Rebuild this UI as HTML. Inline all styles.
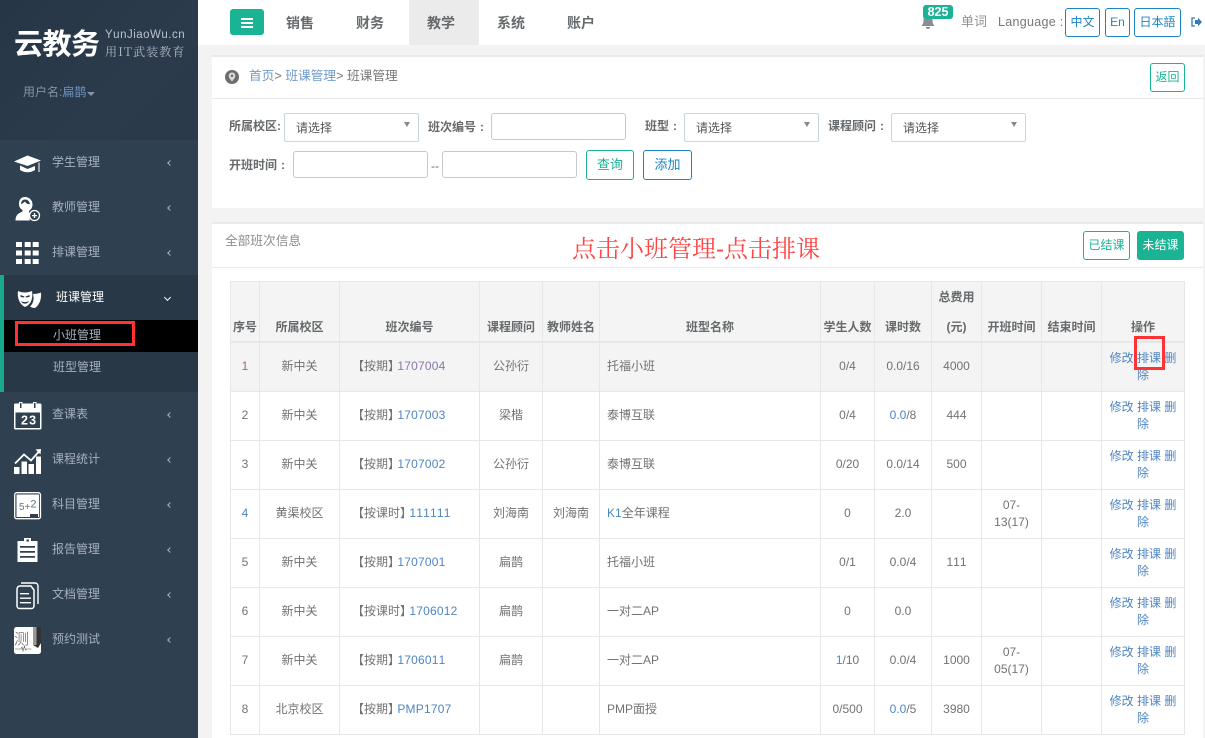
<!DOCTYPE html>
<html lang="zh"><head><meta charset="utf-8"><title>云教务</title>
<style>
*{box-sizing:border-box}
html,body{margin:0;padding:0;width:1205px;height:738px;overflow:hidden;background:#f3f3f4}
body{font:12px/1.4 "Liberation Sans","Noto Sans CJK SC",sans-serif;color:#676a6c;font-kerning:none}
#root{position:absolute;left:0;top:0;width:1205px;height:738px;overflow:hidden;background:#f3f3f4}
.a{position:absolute;white-space:nowrap}
#side{position:absolute;left:0;top:0;width:198px;height:738px;background:#2f4050;overflow:hidden}
#side .hd{position:absolute;left:0;top:0;width:198px;height:140px;background:linear-gradient(135deg,#263646,#2b3b4c 60%,#2a3a4a)}
.mi{position:absolute;left:52px;color:#a7b1c2;font-size:12px;line-height:17px;white-space:nowrap}
.ch{position:absolute;left:168px;width:4px;height:4px;border-left:1px solid #a7b1c2;border-bottom:1px solid #a7b1c2;transform:rotate(45deg)}
.ic{position:absolute;left:0;top:0}
#top{position:absolute;left:198px;top:0;width:1007px;height:45px;background:#fff}
.nav{position:absolute;top:14px;font-size:14px;line-height:19px;font-weight:bold;color:#676a6c}
.panel{position:absolute;left:212px;width:991px;background:#fff;border-top:2px solid #e7eaec}
.ln{position:absolute;height:1px;background:#e7eaec}
.btn{position:absolute;border:1px solid #1ab394;border-radius:3px;text-align:center;color:#1ab394;background:#fff;white-space:nowrap}
.bb{border-color:#1c84c6;color:#1c84c6}
.inp{position:absolute;border:1px solid #c8c8cc;border-radius:3px;background:#fff}
.sel{position:absolute;height:29px;border:1px solid #cbd5dd;border-radius:2px;background:#fff;color:#555;font-size:12px;line-height:28px;padding-left:11px}
.sel:after{content:"";position:absolute;right:8px;top:8px;border:3px solid transparent;border-top:5px solid #888;border-bottom:0}
.lb{position:absolute;font-weight:bold;font-size:12px;line-height:17px;color:#676a6c;white-space:nowrap}
.lb i{font-style:normal;margin-left:4px}
table{position:absolute;left:230px;top:281px;width:954px;border-collapse:collapse;table-layout:fixed;font-size:12px;line-height:17px}
th,td{border:1px solid #e7e7e7;text-align:center;padding:0 1px;font-weight:normal;vertical-align:middle}
th{background:#f4f4f4;font-weight:bold;height:59px;vertical-align:bottom;padding-bottom:5px;color:#676a6c;border-bottom-width:2px}
td{height:49px;color:#707274}
tr.f td{background:#f4f4f4}
.l{text-align:left;padding-left:7px}
.n{text-align:left;padding-left:12px}
a{color:#4f86c0;text-decoration:none}
.n a{letter-spacing:.2px;margin-left:-6px}
tr.f td.r{color:#a8666c}
tr.f .n a{color:#8a76a8}
.op{vertical-align:top;padding:7px 1px 0}
.red{position:absolute;border:3px solid #f33;background:transparent}
</style></head><body><div id="root">
<div id="side">
<div class="hd"></div>
<div class="a" style="left:14px;top:25px;font-size:29px;line-height:40px;font-weight:bold;color:#fff;letter-spacing:-.5px">云教务</div>
<div class="a" style="left:105px;top:28px;font-size:11.5px;line-height:14px;color:#b9c2cc;letter-spacing:.5px">YunJiaoWu.cn</div>
<div class="a" style="left:105px;top:44px;font:12px/15px 'Noto Serif CJK SC',serif;color:#aeb6bf;letter-spacing:1.1px">用IT武装教育</div>
<div class="a" style="left:23px;top:84px;line-height:17px;color:#8095a8">用户名:<span style="color:#6d93bd">扁鹊</span></div>
<div class="a" style="left:87px;top:92px;border:4px solid transparent;border-top:4px solid #8095a8;border-bottom:0"></div>

<div style="position:absolute;left:0;top:275px;width:198px;height:117px;background:#293846"></div>
<div style="position:absolute;left:0;top:275px;width:4px;height:117px;background:#19aa8d"></div>
<div style="position:absolute;left:4px;top:320px;width:194px;height:32px;background:#000"></div>

<svg class="ic" width="60" height="670" viewBox="0 0 60 670" fill="#fff">
<!-- cap -->
<path d="M14 161.5 L27.500 155.500 L41 160.500 L27.500 166 Z"/><path d="M20 165.500 V170 Q27.500 174.500 35 170 V166 L27.500 169 Z"/><path d="M38.500 162.500h1v9.500h-1z"/>
<!-- person -->
<path d="M25 197c4.500 0 7.500 3.500 7.500 7.500 0 3-1.500 5-3.500 6.500v1.500l2 1a7 7 0 0 0-1 7H15.500c0-4 1.500-6.500 5-8l2-1v-1.500c-2.500-1.500-3.500-3.500-3.500-6C19 199.500 21 197 25 197zM25 199.500c-2.500 0-4 2-4 4.500 0 0 2-.5 4-2.500 1 2 3 3 5 2.500-.5-2.500-2-4.500-5-4.500z" fill-rule="evenodd"/>
<circle cx="34.500" cy="215.500" r="5" fill="none" stroke="#fff" stroke-width="1.300"/><path d="M32 215h5v1.200h-5zM33.900 213h1.200v5h-1.200z"/>
<!-- grid -->
<path d="M16 242h6v5h-6zM24.700 242h6v5h-6zM32.700 242h6v5h-6zM16 250.500h6v5h-6zM24.700 250.500h6v5h-6zM32.700 250.500h6v5h-6zM16 259h6v5h-6zM24.700 259h6v5h-6zM32.700 259h6v5h-6z"/>
<!-- masks -->
<path fill-rule="evenodd" d="M18 291c4 2 9 2 14 0 1 6 0 13-7 16-6-3-8-10-7-16zM20.500 295l4 1.500-.5 1-3.500-.5zM29.500 295l-4 1.500.5 1 3.500-.5zM21 301c2 1.500 6 1.500 8 0-1 3.500-7 3.500-8 0z"/>
<path d="M33 294c3 0 6-.5 8-1.500 .5 6-1 12-6 15.500-2 0-3.500-.5-5-1.500 3-2.500 4.500-7 3-12.500z"/>
<!-- calendar -->
<path fill-rule="evenodd" d="M15.500 403.500H19v-1.500h3.500v1.500h10.500v-1.500h3.500v1.500h3.500a1.500 1.500 0 0 1 1.500 1.500V428a1.500 1.500 0 0 1-1.500 1.500H15.500A1.500 1.500 0 0 1 14 428V405a1.500 1.500 0 0 1 1.500-1.500zM15.500 412.500v15.500h24.500v-15.500z"/>
<path d="M20 403h1.500v5H20zM34 403h1.500v5H34z" fill="#2f4050"/>
<text x="21" y="424.500" font-size="12.500" font-weight="bold" font-family="'Liberation Sans',sans-serif" letter-spacing="1.200" fill="#fff">23</text>
<!-- chart -->
<path d="M15 463.500 24 454.500 31 460.500 38.500 452" fill="none" stroke="#fff" stroke-width="1.800"/><path d="M35.500 449.500 41 449 40.500 454.500z"/>
<path d="M14 467h5.500v7H14zM21.500 461.500h5.500v12.500h-5.500zM28.500 464h5.500v10h-5.500zM36 456.500h5v17.500h-5z"/>
<!-- board -->
<rect x="14.700" y="492.700" width="25.800" height="26" rx="2" fill="#2f4050" stroke="#fff" stroke-width="1.300"/>
<rect x="16.500" y="494.500" width="22.500" height="22.500" fill="#fff"/>
<path d="M30 514h8v3h-8z" fill="#2f4050"/>
<text x="19" y="510" font-size="10" font-family="'Liberation Sans',sans-serif" fill="#68737e">5+<tspan dy="-2.500" font-size="11">2</tspan></text>
<!-- clipboard -->
<path fill-rule="evenodd" d="M24 541v-3h7v3h6.500v21h-20v-21zM26.500 539.500v2h2.500v-2zM20 546v1.800h15V546zM20 551v1.800h15V551zM20 556v1.800h15V556z"/>
<!-- docs -->
<path d="M21 583h14a3 3 0 0 1 3 3v18" fill="none" stroke="#fff" stroke-width="1.400"/>
<path d="M20 586h11l3 4v16a2.500 2.500 0 0 1-2.500 2.500H19.500A2.500 2.500 0 0 1 17 606V589a3 3 0 0 1 3-3z" fill="none" stroke="#fff" stroke-width="1.500"/>
<path d="M20 593h9v1.400h-9zM20 597.500h11v1.400H20zM20 602h11v1.400H20z"/>
<!-- test -->
<rect x="14" y="627" width="27" height="27" rx="2.500"/>
<path d="M36.500 627H41v16l-3 5-5-3v-18z" fill="#333"/><path d="M33 627h3.500v18H33z" fill="#999"/>
<path d="M15 649h6l1-2 1 4 1.500-5 1 4 1-1h5" fill="none" stroke="#555" stroke-width=".6"/>
<text x="14" y="644" font-size="15" font-family="'Noto Sans CJK SC',sans-serif" font-weight="300" fill="#555">测</text>
</svg>

<div class="mi" style="top:154px">学生管理</div><div class="ch" style="top:161px"></div>
<div class="mi" style="top:199px">教师管理</div><div class="ch" style="top:206px"></div>
<div class="mi" style="top:244px">排课管理</div><div class="ch" style="top:251px"></div>
<div class="mi" style="top:289px;left:56px;color:#fff">班课管理</div>
<div class="a" style="left:165px;top:295px;width:5px;height:5px;border-left:1px solid #fff;border-bottom:1px solid #fff;transform:rotate(-45deg)"></div>
<div class="mi" style="top:327px;left:53px">小班管理</div>
<div class="mi" style="top:359px;left:53px">班型管理</div>
<div class="red" style="left:15px;top:321px;width:120px;height:25px"></div>
<div class="mi" style="top:406px">查课表</div><div class="ch" style="top:413px"></div>
<div class="mi" style="top:451px">课程统计</div><div class="ch" style="top:458px"></div>
<div class="mi" style="top:496px">科目管理</div><div class="ch" style="top:503px"></div>
<div class="mi" style="top:541px">报告管理</div><div class="ch" style="top:548px"></div>
<div class="mi" style="top:586px">文档管理</div><div class="ch" style="top:593px"></div>
<div class="mi" style="top:631px">预约测试</div><div class="ch" style="top:638px"></div>
</div>

<div id="top"></div>
<div style="position:absolute;left:230px;top:9px;width:34px;height:26px;border-radius:3px;background:#1ab394"></div>
<div style="position:absolute;left:241px;top:18px;width:12px;height:2px;background:#fff"></div>
<div style="position:absolute;left:241px;top:22px;width:12px;height:2px;background:#fff"></div>
<div style="position:absolute;left:241px;top:26px;width:12px;height:2px;background:#fff"></div>
<div style="position:absolute;left:409px;top:0;width:70px;height:45px;background:#ebebec"></div>
<div class="nav" style="left:286px">销售</div>
<div class="nav" style="left:356px">财务</div>
<div class="nav" style="left:427px">教学</div>
<div class="nav" style="left:497px">系统</div>
<div class="nav" style="left:567px">账户</div>

<svg class="a" style="left:921px;top:14px" width="14" height="15" viewBox="0 0 14 15" fill="#888e94"><path d="M7 1c3 0 4.500 2.500 4.500 5 0 3 .8 4.500 2 6H.5c1.200-1.500 2-3 2-6C2.500 3.500 4 1 7 1zM5 13h4a2 2 0 0 1-4 0z"/></svg>
<div class="a" style="left:923px;top:5px;width:30px;height:14px;border-radius:3px;background:#1ab394;color:#fff;font-size:12.500px;line-height:14px;font-weight:bold;text-align:center">825</div>
<div class="a" style="left:961px;top:13px;font-size:13px;line-height:17px;color:#8f9396">单词</div>
<div class="a" style="left:998px;top:14px;font-size:12.500px;line-height:16px;color:#777;letter-spacing:.3px">Language :</div>
<div class="btn bb" style="left:1065px;top:8px;width:35px;height:29px;line-height:27px">中文</div>
<div class="btn bb" style="left:1105px;top:8px;width:25px;height:29px;line-height:27px">En</div>
<div class="btn bb" style="left:1134px;top:8px;width:47px;height:29px;line-height:27px">日本語</div>
<svg class="a" style="left:1191px;top:17px" width="11" height="10" viewBox="0 0 11 10"><path d="M4 1H1v8h3" fill="none" stroke="#337ab7" stroke-width="1.300"/><path d="M4 3h3V.8L11 5 7 9.200V7H4z" fill="#337ab7"/></svg>

<div class="panel" style="top:55px;height:153px"></div>
<div class="ln" style="left:212px;top:98px;width:991px"></div>
<svg class="a" style="left:225px;top:70px" width="14" height="14" viewBox="0 0 14 14"><circle cx="7" cy="7" r="7" fill="#6d6d6d"/><path d="M7 2.500a3.300 3.300 0 0 1 3.300 3.300C10.300 8 7 11.500 7 11.500S3.700 8 3.700 5.800A3.300 3.300 0 0 1 7 2.500z" fill="#ddd"/><circle cx="7" cy="5.800" r="1.300" fill="#6d6d6d"/></svg>
<div class="a" style="left:249px;top:68px;line-height:17px;font-size:12.700px;color:#777"><a style="color:#6f9bc8">首页</a>&gt; <a style="color:#6f9bc8">班课管理</a>&gt; 班课管理</div>
<div class="btn" style="left:1150px;top:63px;width:35px;height:29px;line-height:27px">返回</div>

<div class="lb" style="left:229px;top:118px">所属校区:</div>
<div class="sel" style="left:284px;top:113px;width:135px">请选择</div>
<div class="lb" style="left:428px;top:119px">班次编号<i>:</i></div>
<div class="inp" style="left:491px;top:113px;width:135px;height:27px"></div>
<div class="lb" style="left:645px;top:118px">班型<i>:</i></div>
<div class="sel" style="left:684px;top:113px;width:135px">请选择</div>
<div class="lb" style="left:828px;top:118px">课程顾问<i>:</i></div>
<div class="sel" style="left:891px;top:113px;width:135px">请选择</div>
<div class="lb" style="left:229px;top:157px">开班时间<i>:</i></div>
<div class="inp" style="left:293px;top:151px;width:135px;height:27px"></div>
<div class="a" style="left:431px;top:158px;line-height:17px">--</div>
<div class="inp" style="left:442px;top:151px;width:135px;height:27px"></div>
<div class="btn" style="left:586px;top:150px;width:48px;height:30px;line-height:28px;font-size:13px">查询</div>
<div class="btn bb" style="left:643px;top:150px;width:49px;height:30px;line-height:28px;font-size:13px">添加</div>

<div class="panel" style="top:222px;height:516px"></div>
<div class="ln" style="left:212px;top:267px;width:991px"></div>
<div class="a" style="left:225px;top:233px;line-height:17px;font-size:12.700px;color:#8a8c8e">全部班次信息</div>
<div class="a" style="left:572px;top:233px;font:24px/34px 'Liberation Sans','Noto Serif CJK SC',serif;color:#f44">点击小班管理-点击排课</div>
<div class="btn" style="left:1083px;top:231px;width:47px;height:29px;line-height:27px">已结课</div>
<div class="btn" style="left:1137px;top:231px;width:47px;height:29px;line-height:27px;background:#1ab394;color:#fff;font-weight:normal">未结课</div>

<table>
<colgroup><col style="width:29px"><col style="width:80px"><col style="width:140px"><col style="width:63px"><col style="width:57px"><col style="width:221px"><col style="width:54px"><col style="width:57px"><col style="width:50px"><col style="width:60px"><col style="width:60px"><col style="width:83px"></colgroup>
<tr><th>序号</th><th>所属校区</th><th>班次编号</th><th>课程顾问</th><th>教师姓名</th><th>班型名称</th><th>学生人数</th><th>课时数</th><th><div style="height:54px;line-height:30px">总费用<br>(元)</div></th><th>开班时间</th><th>结束时间</th><th>操作</th></tr>
<tr class="f"><td class="r">1</td><td>新中关</td><td class="n">【按期】 <a>1707004</a></td><td>公孙衍</td><td></td><td class="l">托福小班</td><td>0/4</td><td>0.0/16</td><td>4000</td><td></td><td></td><td class="op"><a>修改 排课 删<br>除</a></td></tr>
<tr><td>2</td><td>新中关</td><td class="n">【按期】 <a>1707003</a></td><td>梁楷</td><td></td><td class="l">泰博互联</td><td>0/4</td><td><a>0.0</a>/8</td><td>444</td><td></td><td></td><td class="op"><a>修改 排课 删<br>除</a></td></tr>
<tr><td>3</td><td>新中关</td><td class="n">【按期】 <a>1707002</a></td><td>公孙衍</td><td></td><td class="l">泰博互联</td><td>0/20</td><td>0.0/14</td><td>500</td><td></td><td></td><td class="op"><a>修改 排课 删<br>除</a></td></tr>
<tr><td><a>4</a></td><td>黄渠校区</td><td class="n">【按课时】 <a>111111</a></td><td>刘海南</td><td>刘海南</td><td class="l"><a>K1</a>全年课程</td><td>0</td><td>2.0</td><td></td><td>07-<br>13(17)</td><td></td><td class="op"><a>修改 排课 删<br>除</a></td></tr>
<tr><td>5</td><td>新中关</td><td class="n">【按期】 <a>1707001</a></td><td>扁鹊</td><td></td><td class="l">托福小班</td><td>0/1</td><td>0.0/4</td><td>111</td><td></td><td></td><td class="op"><a>修改 排课 删<br>除</a></td></tr>
<tr><td>6</td><td>新中关</td><td class="n">【按课时】 <a>1706012</a></td><td>扁鹊</td><td></td><td class="l">一对二AP</td><td>0</td><td>0.0</td><td></td><td></td><td></td><td class="op"><a>修改 排课 删<br>除</a></td></tr>
<tr><td>7</td><td>新中关</td><td class="n">【按期】 <a>1706011</a></td><td>扁鹊</td><td></td><td class="l">一对二AP</td><td><a>1</a>/10</td><td>0.0/4</td><td>1000</td><td>07-<br>05(17)</td><td></td><td class="op"><a>修改 排课 删<br>除</a></td></tr>
<tr><td>8</td><td>北京校区</td><td class="n">【按期】 <a>PMP1707</a></td><td></td><td></td><td class="l">PMP面授</td><td>0/500</td><td><a>0.0</a>/5</td><td>3980</td><td></td><td></td><td class="op"><a>修改 排课 删<br>除</a></td></tr>
</table>
<div class="red" style="left:1134px;top:336px;width:31px;height:34px"></div>
</div></body></html>
